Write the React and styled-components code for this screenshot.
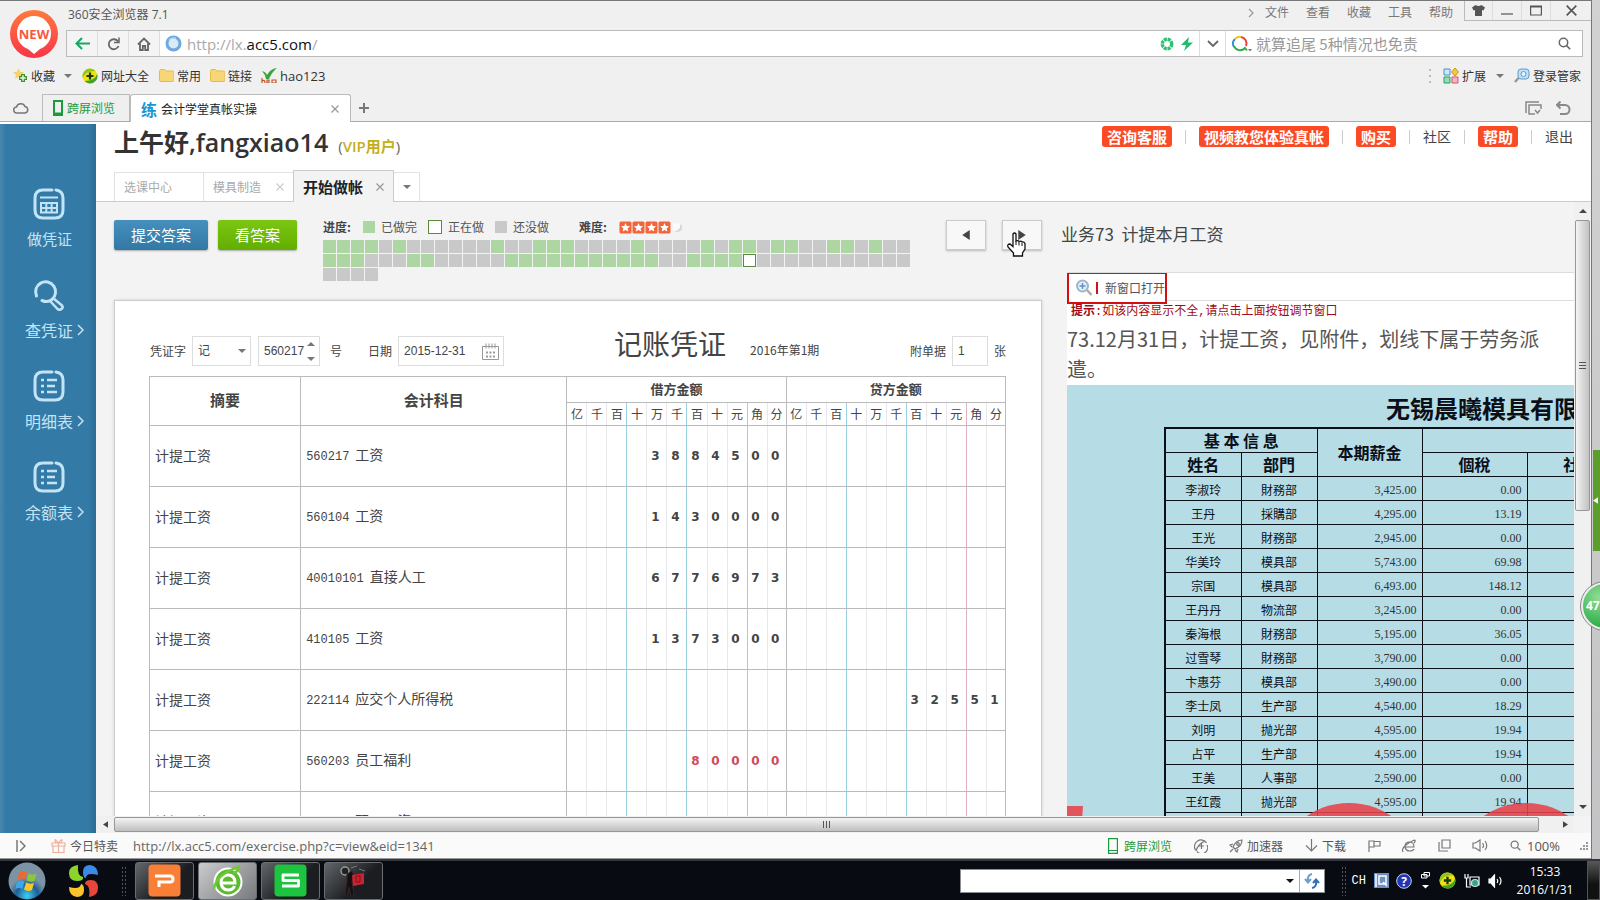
import React from 'react';
import styled, { createGlobalStyle, css } from 'styled-components';

const Global = createGlobalStyle`
  * { box-sizing: border-box; }
  body { margin: 0; background: #c6c6c8; color: #444; font: 12px/16px "Open Sans", "Noto Sans CJK SC", sans-serif; }
  button, input, select { font: inherit; color: inherit; margin: 0; padding: 0; border: 0; background: none; border-radius: 0; outline: 0; }
  a { color: inherit; text-decoration: none; }
  h1, h2, h3, p { margin: 0; font-weight: 400; }
  svg { display: block; flex: none; }
`;

const cjk = '"Noto Sans CJK SC", sans-serif';

/* ---------- frame ---------- */
const Screen = styled.div`
  height: 100vh; min-height: 600px; display: flex; flex-direction: column; overflow: hidden; position: relative;
`;
const Desktop = styled.div`
  flex: 1; min-height: 0; display: flex; padding-right: 8px;
  background: linear-gradient(#d2d2d2, #c4c4c6);
`;
const BrowserWindow = styled.div`
  flex: 1; min-width: 0; display: flex; flex-direction: column; background: #f0f0f0;
  border-top: 1px solid #777; border-right: 1px solid #777;
`;

/* ---------- browser chrome ---------- */
const ChromeTop = styled.header`
  display: grid; grid-template-columns: 66px minmax(0, 1fr); grid-template-rows: 29px 27px;
`;
const LogoCell = styled.div`
  grid-row: 1 / 3; display: flex; padding: 8px 0 0 9px;
`;
const TitleRow = styled.div`
  display: flex; align-items: flex-start; color: #555;
`;
const WindowTitle = styled.span`font-size: 12px; line-height: 28px; padding-left: 2px;`;
const MenuBar = styled.nav`
  margin-left: auto; display: flex; align-items: center; height: 24px; gap: 17px; margin-right: 11px; color: #777;
  svg { margin-right: -6px; }
`;
const WindowButtons = styled.div`
  display: flex; height: 20px; border: 1px solid #bbb; border-top: 0; border-right: 0;
`;
const WindowButton = styled.button`
  width: ${p => p.$w}px; display: flex; align-items: center; justify-content: center;
  & + & { border-left: 1px solid #ddd; }
`;
const AddressBar = styled.div`
  display: flex; margin-right: 8px; background: #fff; border: 1px solid #bbb;
`;
const NavButton = styled.button`
  width: 31px; display: flex; align-items: center; justify-content: center; background: #f4f4f4; border-right: 1px solid #ddd;
`;
const UrlBox = styled.a`
  flex: 1; display: flex; align-items: center; padding-left: 5px; font-size: 15px; color: #aaa;
  svg { margin-right: 5px; }
  b { font-weight: 400; color: #111; }
`;
const AddressTools = styled.div`display: flex; align-items: center; gap: 7px; padding-right: 6px;`;
const AddressDrop = styled.button`
  width: 27px; border: 1px solid #ddd; border-width: 0 1px; display: flex; align-items: center; justify-content: center;
`;
const SearchBox = styled.label`
  width: 356px; display: flex; align-items: center; padding: 0 11px 0 6px;
  input { flex: 1; min-width: 0; margin-left: 4px; font: 15px/22px ${cjk}; color: #999; }
  input::placeholder { color: #999; opacity: 1; }
`;
const Bookmarks = styled.nav`
  height: 37px; display: flex; align-items: center; padding: 0 10px 0 13px; color: #333;
`;
const Bookmark = styled.a`
  display: flex; align-items: center; gap: 3px; margin-right: ${p => p.$after}px; font-family: ${p => (p.$latin ? '"Open Sans"' : cjk)}; font-size: ${p => (p.$latin ? 13 : 12)}px;
`;
const BookmarkGap = styled.i`width: 10px;`;
const Push = styled.span`margin-left: auto;`;
const Caret = styled.span`
  width: 0; height: 0; border: ${p => p.$s || 4}px solid transparent; border-bottom: 0; border-top-color: ${p => p.$c || '#777'};
  ${p => p.$up && css`transform: rotate(180deg);`}
`;
const TabStrip = styled.nav`
  height: 28px; display: flex; align-items: stretch; border-bottom: 1px solid #aaa; padding-left: 13px;
  font-family: ${cjk};
`;
const StripIcon = styled.button`display: flex; align-items: center; width: ${p => p.$w}px;`;
const BrowserTab = styled.a`
  display: flex; align-items: center; width: ${p => p.$w}px; padding: 0 10px; gap: 4px; border: 1px solid #bbb; border-bottom: 0;
  color: ${p => (p.$active ? '#222' : '#1d9b3c')};
  background: ${p => (p.$active ? '#fff' : '#efefef')};
  ${p => p.$active && css`margin-bottom: -1px; border-radius: 3px 3px 0 0;`}
  svg:last-child:not(:first-child) { margin-left: auto; margin-right: 1px; }
`;
const Favicon = styled.b`font-size: 16px; color: #1b95d4; width: 16px;`;

/* ---------- page ---------- */
const Page = styled.div`flex: 1; min-height: 0; display: flex; background: #fff;`;
const Sidebar = styled.nav`
  width: 96px; flex: none; margin-top: 2px; padding-top: 64px; display: flex; flex-direction: column; gap: 30px;
  background: linear-gradient(90deg, #4a86ad 0, #337ba6 6px, #337ba6 88px, #2b6c95 96px); color: #c3e3f7;
`;
const SideItem = styled.a`
  display: flex; flex-direction: column; gap: 9px; padding-left: 25px; font: ${p => (p.$plain ? 15 : 16)}px/20px ${cjk};
  > svg { margin-left: 8px; }
  span { display: flex; align-items: center; gap: 4px; padding-left: ${p => (p.$plain ? 2 : 0)}px; }
`;
const Main = styled.main`flex: 1; min-width: 0; display: flex; flex-direction: column;`;
const PageHeader = styled.header`
  height: 80px; flex: none; padding: 0 18px; border-bottom: 1px solid #ccc; display: flex; flex-direction: column; justify-content: space-between;
`;
const HeaderTop = styled.div`display: flex; justify-content: space-between; align-items: flex-start; height: 44px;`;
const Greeting = styled.h1`
  font-size: 25px; font-weight: 600; line-height: 40px; color: #333; display: flex; align-items: baseline; gap: 10px;
  small { font-size: 15px; font-weight: 400; line-height: 20px; color: #666; }
  em { font-style: normal; font-weight: 600; color: #c4ae1c; }
`;
const UserNav = styled.nav`
  display: flex; align-items: center; margin-top: 4px; font: 14px/21px ${cjk}; color: #444;
`;
const NavSep = styled.i`width: 1px; height: 14px; background: #ccc; margin: 0 13px;`;
const Pill = styled.a`
  background: #fb4b26; color: #fff; font-weight: 700; font-size: 15px; padding: 0 5px; border-radius: 3px;
`;
const PageTabs = styled.nav`
  display: flex; align-items: flex-end; font-family: ${cjk}; color: #aaa; height: 29px;
`;
const PageTab = styled.a`
  height: ${p => (p.$active ? 32 : 29)}px; width: ${p => p.$w}px; display: flex; align-items: center; justify-content: space-between; padding: 0 9px;
  border: 1px solid #e2e2e2; border-bottom: 0; border-right: 0;
  ${p => p.$active && css`
    font-size: 15px; font-weight: 700; color: #222; background: #f3f3f3; border-color: #ccc; border-right: 1px solid #ccc;
    margin-bottom: -1px;
  `}
  ${p => p.$drop && css`border-right: 1px solid #e2e2e2; border-left: 0;`}
`;
const ScrollGrid = styled.div`
  flex: 1; min-height: 0; display: grid; grid-template-columns: minmax(0, 1fr) 17px; grid-template-rows: minmax(0, 1fr) 17px;
  background: #f3f3f3;
`;
const Content = styled.div`
  overflow: hidden; padding-left: 18px; display: grid; grid-template-columns: minmax(0, 928fr) minmax(0, 507fr); column-gap: 25px;
  grid-template-rows: minmax(0, 1fr);
`;
const Column = styled.section`display: flex; flex-direction: column; min-width: 0; min-height: 0;`;

const Toolbar = styled.div`height: 98px; flex: none; padding-top: 18px; display: flex; align-items: flex-start;`;
const ActionButton = styled.button`
  height: 30px; width: ${p => p.$w}px; margin-right: 10px; border-radius: 2px; color: #fff; font: 15px/28px ${cjk};
  background: ${p => (p.$green ? 'linear-gradient(#7cc613, #62ae00)' : 'linear-gradient(#468fbe, #3278a4)')};
  box-shadow: 0 1px 2px rgba(0,0,0,.3);
`;
const Progress = styled.div`margin-left: 16px; font-family: ${cjk};`;
const Legend = styled.div`
  height: 14px; display: flex; align-items: center; margin-bottom: 6px; color: #555;
  b { width: 40px; color: #444; }
`;
const LegendItem = styled.span`display: flex; align-items: center; gap: 6px; margin-right: ${p => p.$after || 11}px;`;
const cellLook = css`
  ${p => p.$s === 'done' && css`background: #aed6a2;`}
  ${p => p.$s === 'todo' && css`background: #c9c9c9;`}
  ${p => p.$s === 'now' && css`background: #fff; border: 1px solid #5b8a3c;`}
`;
const Swatch = styled.i`width: ${p => (p.$s === 'now' ? 14 : 12)}px; height: ${p => (p.$s === 'now' ? 14 : 12)}px; ${cellLook}`;
const Cells = styled.div`display: grid; grid-template-columns: repeat(42, 13px); grid-auto-rows: 13px; gap: 1px;`;
const Cell = styled.i`${cellLook}`;
const Pager = styled.div`margin-left: auto; display: flex; gap: 16px;`;
const PagerButton = styled.button`
  width: 40px; height: 30px; background: #f8f8f8; border: 1px solid #ccc; box-shadow: 0 1px 2px rgba(0,0,0,.25);
  display: flex; align-items: center; justify-content: center; position: relative;
`;
const HandCursor = styled.svg`position: absolute; left: 4px; top: 11px;`;

/* ---------- voucher ---------- */
const Card = styled.div`
  flex: 1; min-height: 0; overflow: hidden; background: #fff; border: 1px solid #ccc; border-bottom: 0; padding: 26px 35px 0 34px;
  box-shadow: 0 0 3px rgba(0,0,0,.15);
`;
const VoucherHead = styled.div`
  display: flex; align-items: flex-start; height: 49px; font-family: ${cjk}; color: #444;
`;
const FieldGroup = styled.div`display: flex; align-items: center; margin-top: 9px; ${p => p.$right && css`margin-left: auto;`}`;
const Label = styled.label`margin: 0 ${p => p.$r || 6}px 0 ${p => p.$l || 0}px;`;
const Field = styled.span`
  width: ${p => p.$w}px; height: 30px; border: 1px solid #ddd; display: flex; align-items: center; padding: 0 4px 0 5px; margin-right: ${p => p.$r || 0}px;
  input, select { flex: 1; min-width: 0; width: 10px; appearance: none; height: 28px; font: 12px/16px "Liberation Sans", ${cjk}; }
`;
const Spinner = styled.span`
  display: flex; flex-direction: column; gap: 11px;
  button { display: flex; }
`;
const VoucherTitle = styled.div`
  display: flex; align-items: baseline; gap: 24px; margin-left: 110px;
  h2 { font-size: 28px; line-height: 32px; color: #444; }
`;
const Ledger = styled.table`
  width: 100%; table-layout: fixed; border-collapse: collapse; font-family: ${cjk}; color: #444;
  th, td { padding: 0 0 2px; font-weight: 400; border: 1px solid #bbb; }
`;
const HeadCell = styled.th`&& { font-weight: 700; font-size: ${p => p.$size}px; height: ${p => p.$h}px; }`;
const unitEdge = i => (i === 0 ? '#bbb' : i === 3 || i === 6 ? '#9ad0df' : i === 9 ? '#dfb3c4' : '#e8e8ea');
const UnitCell = styled.th`&& { height: 23px; padding: 0; border-left-color: ${p => unitEdge(p.$i)}; border-right-color: ${p => unitEdge((p.$i + 1) % 11)}; font-size: 12px; }`;
const DigitCell = styled.td`
  && { border-left-color: ${p => unitEdge(p.$i)}; border-right-color: ${p => unitEdge((p.$i + 1) % 11)};
  padding: 0 3px 0 0; text-align: center; font: 700 12px/16px "DejaVu Sans"; color: ${p => (p.$red ? '#d04a58' : '#444')}; }
`;
const TextCell = styled.td`
  && { height: 61px; padding-left: 5px; font-size: 14px; }
  code { font: 12px/16px "Liberation Mono"; margin-right: 6px; }
`;

/* ---------- task panel ---------- */
const TaskTitle = styled.h2`
  height: 70px; flex: none; margin-left: -6px; font: 17px/64px ${cjk}; color: #444;
`;
const Panel = styled.div`
  flex: 1; min-height: 0; overflow: hidden; background: #fff; display: flex; flex-direction: column; border-top: 1px solid #ddd;
`;
const PanelBar = styled.div`height: 28px; flex: none; border-bottom: 1px solid #ddd;`;
const OpenButton = styled.button`
  margin-top: -1px; width: 100px; height: 32px; border: 2px solid #d40f12; display: flex; align-items: center; padding-left: 6px; position: relative;
  background: #fff; color: #555; font-family: ${cjk};
  i { width: 2px; height: 12px; background: #d01218; margin: 0 7px 0 3px; }
`;
const Hint = styled.p`
  flex: none; padding: 4px 0 0 4px; height: 23px; line-height: 14px; color: #a30a18; font-family: "Liberation Mono", ${cjk};
`;
const Question = styled.p`flex: none; font: 20px/30px ${cjk}; color: #555; padding-right: 30px; height: 61px;`;
const Sheet = styled.div`
  flex: 1; min-height: 0; background: #b6dce6; overflow: hidden; position: relative; padding-left: 97px; color: #0a0f18;
  h3 { width: 684px; text-align: center; font: 700 24px/46px ${cjk}; height: 42px; }
`;
const Payroll = styled.table`
  width: 467px; table-layout: fixed; border-collapse: collapse; font-family: ${cjk}; border: 2px solid #0a0f18;
  th, td { border: 1px solid #0a0f18; padding: 0; height: 24px; line-height: 16px; text-align: center; }
  td { padding-top: 3px; }
  th { font-size: 16px; font-weight: 700; }
`;
const Amount = styled.td`&& { text-align: right; padding-right: 5px; font: 12px/16px "Liberation Serif"; color: #333; }`;
const Stamps = styled.svg`position: absolute; left: 0; top: 418px; opacity: .88;`;

/* ---------- scrollbars ---------- */
const VBar = styled.div`display: flex; flex-direction: column; align-items: center; background: #f0f0f0;`;
const HBar = styled.div`display: flex; align-items: center; background: #f0f0f0;`;
const BarArrow = styled.button`width: 18px; height: 18px; display: flex; align-items: center; justify-content: center; flex: none;`;
const Thumb = styled.span`
  flex: ${p => p.$grow} 0 0; display: flex; align-items: center; justify-content: center; border: 1px solid #979797; border-radius: 2px;
  ${p => (p.$v ? css`width: 15px; background: linear-gradient(90deg, #f4f4f4, #dcdcdc 45%, #c2c2c4);` : css`height: 15px; background: linear-gradient(#f4f4f4, #dcdcdc 45%, #bfbfc1);`)}
`;
const Rest = styled.span`flex: ${p => p.$grow} 0 0;`;

/* ---------- status bar, taskbar ---------- */
const StatusBar = styled.footer`
  height: 26px; flex: none; display: flex; align-items: center; background: #fafafa; border-bottom: 1px solid #999; padding: 0 3px 0 16px; color: #555; font-family: ${cjk};
`;
const StatusItem = styled.button`
  display: flex; align-items: center; gap: ${p => p.$gap || 4}px; margin-right: ${p => p.$r}px; color: ${p => p.$c || '#555'};
`;
const StatusUrl = styled.span`font: 13px/16px "Open Sans"; color: #666; margin-right: auto;`;
const Zoom = styled.span`font: 13px/16px "Open Sans";`;
const Taskbar = styled.div`
  height: 41px; flex: none; display: flex; align-items: center; background: #080b12; border-top: 2px solid #33373d; color: #fff; padding-left: 7px;
`;
const Dots = styled.i`width: 6px; height: 30px; background: radial-gradient(#555 1px, transparent 1px) 0 0 / 3px 4px; margin: 0 ${p => p.$r}px 0 ${p => p.$l}px;`;
const TaskButton = styled.button`
  width: 59px; height: 38px; margin-right: 4px; border: 1px solid #6a6d72; border-radius: 3px; display: flex; align-items: center; justify-content: center;
  background: ${p => (p.$active ? 'linear-gradient(135deg, #c9cbcd, #77797c)' : 'linear-gradient(135deg, #63666a, #1b1d21 60%)')};
`;
const IconButton = styled.button`display: flex; margin-right: ${p => p.$r || 0}px; color: #fff;`;
const DeskSearch = styled.label`
  margin-left: auto; width: 365px; height: 24px; background: #fff; border: 1px solid #8a8f96; display: flex; align-items: center;
  input { flex: 1; min-width: 0; height: 22px; }
`;
const DeskGo = styled.button`width: 25px; height: 22px; margin-left: 5px; border-left: 1px solid #8fb0d0; display: flex; align-items: center; justify-content: center;`;
const Tray = styled.div`display: flex; align-items: center; font: 12px/16px "Liberation Mono";`;
const Clock = styled.time`width: 84px; text-align: center; font: 12px/18px "Open Sans"; display: flex; flex-direction: column;`;
const ShowDesktop = styled.button`width: 13px; height: 39px; border: 1px solid #555; background: linear-gradient(#555, #111 60%);`;

/* ---------- floating ---------- */
const SideHandle = styled.button`
  position: absolute; right: 0; top: 450px; width: 7px; height: 101px; background: #5a9e2b; display: flex; align-items: center;
`;
const SpeedBall = styled.div`
  position: absolute; right: -29px; top: 582px; width: 48px; height: 48px; border-radius: 50%; border: 2px solid #eee; outline: 1px solid #888;
  background: radial-gradient(circle at 35% 30%, #8fdc94, #2fae4a 70%); color: #fff; font: 700 12px/44px "Open Sans"; padding-left: 3px;
`;

/* ---------- icons ---------- */
const S = ({ w = 16, h = w, vb, c = '#777', sw = 1.5, children }) => (
  <svg width={w} height={h} viewBox={vb || `0 0 ${w} ${h}`} fill="none" stroke={c} strokeWidth={sw}>{children}</svg>
);
const Cross = ({ c = '#aaa', s = 8 }) => <S w={s} vb="0 0 8 8" c={c} sw="1.2"><path d="M.5.5l7 7M7.5.5l-7 7" /></S>;
const Phone = ({ c = '#1d9b3c', thin }) => (
  <S w={10} h={16} c={c} sw={thin ? 1.2 : 2}>
    <path d={thin ? 'M.6.6h8.800v14.800H.6zM.6 12.500h8.800' : 'M1 1h8v14H1zM1 13.500h8'} />
  </S>
);
const Folder = () => <S w={15} h={13} c="#e3bb4a" sw="1"><path d="M.5 2.5q0-2 1.500-2h3.500l1.500 1.500h6.500q1.500 0 1.500 1.500v7.500q0 1.500-1.500 1.500h-11.500q-1.500 0-1.500-1.500z" fill="#f7d678" /></S>;
const Plus360 = ({ s = 16 }) => (
  <svg width={s} height={s} viewBox="0 0 16 16"><circle cx="8" cy="8" r="7.500" fill="#f2e012" /><path d="M8 .5A7.500 7.500 0 0 0 .8 10Q3 3 13.500 3A7.500 7.500 0 0 0 8 .5" fill="#8cc820" /><path d="M8 15.500A7.500 7.500 0 0 0 15.200 6Q13 13 2.500 13A7.500 7.500 0 0 0 8 15.500" fill="#3ea32a" /><path d="M8 4.500v7M4.500 8h7" stroke="#143c10" strokeWidth="2.200" /></svg>
);
const Frame = () => <path d="M19 2H10Q2 2 2 10v12q0 8 8 8h12q8 0 8-8V10q0-7-7-8" strokeWidth="3" strokeLinecap="round" />;
const SideIcon = ({ kind }) => (
  <S w={32} c="#c3e3f7" sw="2">
    {kind === 'voucher' && <><Frame /><path d="M7 9.500h18M8 15h16v9.500H8zM8 20h16M13.300 15v9.500M18.600 15v9.500" /></>}
    {kind === 'search' && <><path d="M3.500 17A10 10 0 1 1 19 20.500Q15 24 9 21.500" strokeWidth="3" strokeLinecap="round" /><path d="M20 19l9 7.500q1.500 2-.5 3.500t-4 0l-7-7.500" strokeWidth="2.500" strokeLinejoin="round" /></>}
    {kind === 'list' && <><Frame /><path d="M8 10h3M14 10h10M8 16h3M14 16h8M8 22h3M14 22h10" strokeWidth="2.500" /></>}
  </S>
);
const Tri = ({ d, c = '#444', w = 6, h = 8 }) => <svg width={w} height={h} viewBox="0 0 6 8"><path d={d} fill={c} /></svg>;
const Star = () => <svg width="13" height="13" viewBox="0 0 13 13"><rect width="12" height="12" x=".5" y=".5" rx="1.500" fill="#f2653a" /><path d="M6.500 2l1.300 2.900 3.200.4-2.400 2.100.7 3.100-2.800-1.600-2.800 1.600.7-3.100L2 5.300l3.200-.4z" fill="#fff" /></svg>;
const Lens = ({ c = '#777', s = 13 }) => <S w={s} vb="0 0 13 13" c={c} sw="1.500"><circle cx="5.500" cy="5.500" r="4.200" /><path d="M8.600 8.600l3.600 3.600" /></S>;

/* ---------- data ---------- */
const range = (a, b) => Array.from({ length: b - a + 1 }, (_, i) => a + i);
const done = new Set([0, 1, 2, 3, 5, 12, 15, 16, 17, 22, 27, 29, 30, 32, 33, 36, 37, 39, 42, 43, 44, 48, 49, ...range(55, 65), ...range(68, 71)]);
const cells = range(0, 87).map(i => (i === 72 ? 'now' : done.has(i) ? 'done' : 'todo'));
const units = '亿千百十万千百十元角分'.split('');
const entries = [
  ['560217', '工资', '3884500', ''],
  ['560104', '工资', '1430000', ''],
  ['40010101', '直接人工', '6776973', ''],
  ['410105', '工资', '1373000', ''],
  ['222114', '应交个人所得税', '', '32551'],
  ['560203', '员工福利', '80000', '', true],
  ['560201', '职工工资', '', ''],
];
const payroll = [
  ['李淑玲', '財務部', '3,425.00', '0.00'], ['王丹', '採購部', '4,295.00', '13.19'], ['王光', '財務部', '2,945.00', '0.00'],
  ['华美玲', '模具部', '5,743.00', '69.98'], ['宗国', '模具部', '6,493.00', '148.12'], ['王丹丹', '物流部', '3,245.00', '0.00'],
  ['秦海根', '財務部', '5,195.00', '36.05'], ['过雪琴', '財務部', '3,790.00', '0.00'], ['卞惠芬', '模具部', '3,490.00', '0.00'],
  ['李士凤', '生产部', '4,540.00', '18.29'], ['刘明', '抛光部', '4,595.00', '19.94'], ['占平', '生产部', '4,595.00', '19.94'],
  ['王美', '人事部', '2,590.00', '0.00'], ['王红霞', '抛光部', '4,595.00', '19.94'], ['', '', '', ''],
];

const Digits = ({ value, red }) => value.padStart(11, ' ').split('').map((d, i) => <DigitCell key={i} $i={i} $red={red}>{d.trim()}</DigitCell>);

function Chrome() {
  return (
    <>
      <ChromeTop>
        <LogoCell>
          <svg width="50" height="50" viewBox="0 0 50 50">
            <defs><linearGradient id="new" x2="0" y2="1"><stop stopColor="#ff7a3c" /><stop offset="1" stopColor="#f8354a" /></linearGradient></defs>
            <circle cx="25" cy="25" r="24" fill="url(#new)" />
            <path d="M25 7a17 17 0 0 1 17 17.500c0 8-5 13-11 15.500l-6 5-6-5C13 37.500 8 32.500 8 24.500A17 17 0 0 1 25 7" fill="#fff" />
            <text x="25" y="30" textAnchor="middle" fontSize="13" fontWeight="700" fontFamily="Open Sans" fill="#f9573f">NEW</text>
          </svg>
        </LogoCell>
        <TitleRow>
          <WindowTitle>360安全浏览器 7.1</WindowTitle>
          <MenuBar>
            <S w={6} h={10} c="#999" sw="1.200"><path d="M1 1l4 4-4 4" /></S>
            {['文件', '查看', '收藏', '工具', '帮助'].map(t => <a href="#menu" key={t}>{t}</a>)}
          </MenuBar>
          <WindowButtons>
            <WindowButton $w={27} aria-label="皮肤"><svg width="13" height="11" viewBox="0 0 13 11"><path d="M3.500 0Q6.500 2 9.500 0L13 2.500 11.500 5.500 10 5v6H3V5l-1.500.5L0 2.500z" fill="#555" /></svg></WindowButton>
            <WindowButton $w={29} aria-label="最小化"><S w={12} h={10} c="#555" sw="1.200"><path d="M0 8h12" /></S></WindowButton>
            <WindowButton $w={29} aria-label="最大化"><S w={12} h={11} c="#555" sw="1.200"><path d="M.6 1.500h10.800v8.500H.6z" /><path d="M0 1.500h12" strokeWidth="2" /></S></WindowButton>
            <WindowButton $w={41} aria-label="关闭"><Cross c="#555" s={11} /></WindowButton>
          </WindowButtons>
        </TitleRow>
        <AddressBar>
          <NavButton aria-label="后退"><S w={15} h={13} c="#16a765" sw="2"><path d="M15 6.500H1.500M7 1L1.500 6.500 7 12" /></S></NavButton>
          <NavButton aria-label="刷新"><S w={13} h={14} c="#666" sw="1.800"><path d="M11 4.500A5 5 0 1 0 11.500 9" /><path d="M12 .5v5H7" strokeWidth="1.500" /></S></NavButton>
          <NavButton aria-label="主页"><S w={14} c="#666" sw="1.800"><path d="M1 7.500L7 1.500l6 6M3 6.500V13h2.800V9h2.400v4H11V6.500" /></S></NavButton>
          <UrlBox href="http://lx.acc5.com/">
            <S w={17} c="#6fa8dc" sw="3"><circle cx="8.500" cy="8.500" r="6.500" fill="#d8ebfa" /><path d="M4 5.500a5.500 5.500 0 0 1 7-2" stroke="#b8d6f2" strokeWidth="1.500" /></S>
            <span>http://lx.<b>acc5.com</b>/</span>
          </UrlBox>
          <AddressTools>
            <S w={14} c="#2fc078" sw="3.500"><circle cx="7" cy="7" r="4.700" strokeDasharray="3 .7" /></S>
            <svg width="12" height="14" viewBox="0 0 12 14"><path d="M8 0L0 8h5l-2 6 9-8.500H7z" fill="#27b96c" /></svg>
          </AddressTools>
          <AddressDrop aria-label="展开"><S w={12} h={8} c="#666" sw="1.800"><path d="M1 1l5 5 5-5" /></S></AddressDrop>
          <SearchBox>
            <svg width="20" height="18" viewBox="0 0 20 18" fill="none" strokeWidth="2"><path d="M2 12A6.500 6.500 0 0 1 3 4" stroke="#3a8ee0" /><path d="M3 4a6.500 6.500 0 0 1 6-2" stroke="#f3c52b" /><path d="M9 2a6.500 6.500 0 0 1 5 9" stroke="#e4463c" /><path d="M2 11a6.500 6.500 0 0 0 11 2l2 2.500" stroke="#35a852" /><path d="M16 14h4l-2 2.500z" fill="#777" /></svg>
            <input aria-label="搜索" placeholder="就算追尾 5种情况也免责" />
            <Lens c="#666" />
          </SearchBox>
        </AddressBar>
      </ChromeTop>
      <Bookmarks>
        <Bookmark href="#fav" $after={9}>
          <svg width="15" height="15" viewBox="0 0 15 15"><path d="M5.500 0l1.600 3.800 4 .4-3 2.700.9 4-3.500-2L2 11l.9-4L0 4.300l4-.5z" fill="#f6d36a" /><path d="M10 6v8M6 10h8" stroke="#3d9130" strokeWidth="4" /><path d="M10 7.200v5.600M7.200 10h5.600" stroke="#e8f6e2" strokeWidth="1.500" /></svg>收藏</Bookmark>
        <Caret />
        <BookmarkGap />
        <Bookmark href="#sites" $after={10}><Plus360 />网址大全</Bookmark>
        <Bookmark href="#common" $after={9}><Folder />常用</Bookmark>
        <Bookmark href="#links" $after={9}><Folder />链接</Bookmark>
        <Bookmark href="#hao123" $after={0} $latin>
          <svg width="16" height="15" viewBox="0 0 16 15"><path d="M1 3q4 1 5 4Q9 1 16 0 11 4 8 11H5Q4 6 1 3" fill="#36a53c" /><path d="M1 10v5M1 13q3-2 3 2M6 12h2v3H6zM11 12h4v3h-4z" fill="none" stroke="#c2532b" strokeWidth="1.200" /></svg>hao123</Bookmark>
        <Push />
        <S w={15} h={16} c="#bbb" sw="2"><path d="M2 1v2M2 7v2M2 13v2" /></S>
        <Bookmark href="#ext" $after={10}>
          <S w={16} sw="1"><path d="M1 1h6v6H1z" fill="#cfe7fa" stroke="#4a90c8" /><path d="M1 9h6v6H1z" fill="#8fe0b4" stroke="#2e9e63" /><path d="M9 9h6v6H9z" fill="#f8b3be" stroke="#cf5a6c" /><path d="M12 0l3.500 4L12 8 8.500 4z" fill="#f4c83c" stroke="#c79a1a" /></S>扩展</Bookmark>
        <Caret />
        <BookmarkGap />
        <Bookmark href="#login" $after={0}>
          <S w={16} c="#5f9ccb" sw="1"><rect x="4" y="1" width="11" height="10" rx="3" fill="#bfe0f6" /><circle cx="9.500" cy="6" r="2.500" fill="#e9f6ff" /><path d="M4.500 10L1 14" strokeWidth="2.500" stroke="#999" /></S>登录管家</Bookmark>
      </Bookmarks>
      <TabStrip>
        <StripIcon $w={29} aria-label="云同步"><S w={16} h={12} c="#777" sw="1.500"><path d="M4 11a3 3 0 0 1-.5-6 4.500 4.500 0 0 1 8.500-.5A3.300 3.300 0 0 1 12 11z" /></S></StripIcon>
        <BrowserTab href="#phone" $w={88}><Phone />跨屏浏览</BrowserTab>
        <BrowserTab href="#page" $w={221} $active><Favicon>练</Favicon>会计学堂真帐实操<Cross c="#999" /></BrowserTab>
        <StripIcon $w={27} aria-label="新标签"><S w={26} h={12} c="#777" sw="2"><path d="M13 1v10M8 6h10" /></S></StripIcon>
        <Push />
        <StripIcon $w={31} aria-label="标签列表"><S w={17} h={14} c="#888" sw="1.500"><path d="M1 12V1h13M10 13H4V4h12v4M10 9l2.500 3L15 9" /></S></StripIcon>
        <StripIcon $w={35} aria-label="撤销"><S w={15} h={14} c="#888" sw="2"><path d="M1 4h8a4.500 4.500 0 0 1 0 9H4M4.500.5L1 4l3.500 3.500" /></S></StripIcon>
      </TabStrip>
    </>
  );
}

function Voucher() {
  return (
    <Card>
      <VoucherHead>
        <FieldGroup>
          <Label htmlFor="kind" $l={1}>凭证字</Label>
          <Field $w={59} $r={7}><select id="kind"><option>记</option></select><Caret $s={4} /></Field>
          <Field $w={62} $r={5}>
            <input id="num" defaultValue="560217" />
            <Spinner><button aria-label="加"><Caret $s={4} $up /></button><button aria-label="减"><Caret $s={4} /></button></Spinner>
          </Field>
          <Label htmlFor="num" $l={5} $r={20}>号</Label>
          <Label htmlFor="date" $l={6}>日期</Label>
          <Field $w={106}>
            <input id="date" defaultValue="2015-12-31" />
            <S w={17} c="#999" sw="1"><path d="M.5 3.500h16v13H.5zM4 .5v5M7 .5v5M10 .5v5M13 .5v5" /><path d="M4 9.500h9M4 13.500h9" strokeDasharray="2 1.500" strokeWidth="2" /></S>
          </Field>
        </FieldGroup>
        <VoucherTitle><h2>记账凭证</h2><span>2016年第1期</span></VoucherTitle>
        <FieldGroup $right>
          <Label htmlFor="att">附单据</Label>
          <Field $w={36} $r={6}><input id="att" defaultValue="1" /></Field>张
        </FieldGroup>
      </VoucherHead>
      <Ledger>
        <colgroup><col width="151" /><col width="266" />{range(0, 21).map(i => <col key={i} width={i % 11 === 10 ? 19 : 20} />)}</colgroup>
        <thead>
          <tr><HeadCell rowSpan={2} $size={15} $h={49}>摘要</HeadCell><HeadCell rowSpan={2} $size={15} $h={49}>会计科目</HeadCell><HeadCell colSpan={11} $size={13} $h={26}>借方金额</HeadCell><HeadCell colSpan={11} $size={13} $h={26}>贷方金额</HeadCell></tr>
          <tr>{[...units, ...units].map((u, i) => <UnitCell key={i} $i={i % 11}>{u}</UnitCell>)}</tr>
        </thead>
        <tbody>
          {entries.map(([code, name, debit, credit, red]) => (
            <tr key={code}><TextCell>计提工资</TextCell><TextCell><code>{code}</code>{name}</TextCell><Digits value={debit} red={red} /><Digits value={credit} /></tr>
          ))}
        </tbody>
      </Ledger>
    </Card>
  );
}

function Task() {
  return (
    <Column>
      <TaskTitle>业务73&nbsp; 计提本月工资</TaskTitle>
      <Panel>
        <PanelBar>
          <OpenButton><S w={18} c="#9fb4c8" sw="2"><circle cx="7.500" cy="7" r="5.500" fill="#e4f0fa" /><path d="M7.500 4v6M4.500 7h6" stroke="#5a93c8" strokeWidth="1.500" /><path d="M12 11l4.500 5" stroke="#aaa" strokeWidth="2.500" /></S><i />新窗口打开</OpenButton>
        </PanelBar>
        <Hint><b>提示</b>:如该内容显示不全,请点击上面按钮调节窗口</Hint>
        <Question>73.12月31日，计提工资，见附件，划线下属于劳务派遣。</Question>
        <Sheet>
          <h3>无锡晨曦模具有限公司</h3>
          <Payroll>
            <colgroup><col width="76" /><col width="76" /><col width="105" /><col width="105" /><col width="105" /></colgroup>
            <thead>
              <tr><th colSpan={2}>基 本 信 息</th><th rowSpan={2}>本期薪金</th><th colSpan={2} /></tr>
              <tr><th>姓名</th><th>部門</th><th>個稅</th><th>社保</th></tr>
            </thead>
            <tbody>
              {payroll.map(([n, d, a, t], i) => <tr key={i}><td>{n}</td><td>{d}</td><Amount>{a}</Amount><Amount>{t}</Amount><td /></tr>)}
            </tbody>
          </Payroll>
          <Stamps width="508" height="60" viewBox="0 0 508 60"><g fill="#e8434b"><path d="M0 3h16l-4 57H0z" /><ellipse cx="282" cy="60" rx="68" ry="60" /><ellipse cx="459" cy="60" rx="68" ry="60" /></g></Stamps>
        </Sheet>
      </Panel>
    </Column>
  );
}

export default function App() {
  return (
    <>
      <Global />
      <Screen>
        <Desktop>
          <BrowserWindow>
            <Chrome />
            <Page>
              <Sidebar>
                {[['做凭证', 'voucher'], ['查凭证', 'search'], ['明细表', 'list'], ['余额表', 'list']].map(([t, k], i) => (
                  <SideItem href="#side" key={t} $plain={i === 0}><SideIcon kind={k} /><span>{t}{i > 0 && <S w={7} h={12} c="#c3e3f7" sw="1.500"><path d="M1 1l5 5-5 5" /></S>}</span></SideItem>
                ))}
              </Sidebar>
              <Main>
                <PageHeader>
                  <HeaderTop>
                    <Greeting>上午好,fangxiao14<small>(<em>VIP用户</em>)</small></Greeting>
                    <UserNav>
                      <Pill href="#qa">咨询客服</Pill><NavSep /><Pill href="#video">视频教您体验真帐</Pill><NavSep /><Pill href="#buy">购买</Pill><NavSep />
                      <a href="#bbs">社区</a><NavSep /><Pill href="#help">帮助</Pill><NavSep /><a href="#exit">退出</a>
                    </UserNav>
                  </HeaderTop>
                  <PageTabs>
                    <PageTab href="#t1" $w={89}>选课中心</PageTab>
                    <PageTab href="#t2" $w={90}>模具制造<Cross c="#ccc" /></PageTab>
                    <PageTab href="#t3" $w={101} $active>开始做帐<Cross c="#999" /></PageTab>
                    <PageTab href="#t4" $w={26} $drop><Caret /></PageTab>
                  </PageTabs>
                </PageHeader>
                <ScrollGrid>
                  <Content>
                    <Column>
                      <Toolbar>
                        <ActionButton $w={94}>提交答案</ActionButton>
                        <ActionButton $w={79} $green>看答案</ActionButton>
                        <Progress>
                          <Legend>
                            <b>进度:</b>
                            <LegendItem><Swatch $s="done" />已做完</LegendItem>
                            <LegendItem><Swatch $s="now" />正在做</LegendItem>
                            <LegendItem $after={30}><Swatch $s="todo" />还没做</LegendItem>
                            <b>难度:</b>
                            <Star /><Star /><Star /><Star />
                            <svg width="13" height="13" viewBox="0 0 13 13"><path d="M10 3q2 2 1 5T5 11H2q5 0 8-8" fill="#d6d6d6" /><path d="M2 2h7v5l-4 3H2z" fill="#fafafa" /></svg>
                          </Legend>
                          <Cells>{cells.map((s, i) => <Cell key={i} $s={s} />)}</Cells>
                        </Progress>
                        <Pager>
                          <PagerButton aria-label="上一题"><Tri d="M6 0v8L0 4z" w={8} h={10} /></PagerButton>
                          <PagerButton aria-label="下一题"><Tri d="M0 0v8l6-4z" w={8} h={10} />
                            <HandCursor width="19" height="25" viewBox="0 0 19 25"><path d="M6 2q1.500-2 3 0v7q2-1 3 .5 2-1 3 .5 2-.5 3 1.500V17l-2.500 4v3h-9v-3L1 15q-1-3 2-3l3 2.500z" fill="#fff" stroke="#111" strokeWidth="1.300" /><path d="M9 9v4M12 10v3.500M15 11v3" stroke="#111" /></HandCursor>
                          </PagerButton>
                        </Pager>
                      </Toolbar>
                      <Voucher />
                    </Column>
                    <Task />
                  </Content>
                  <VBar>
                    <BarArrow aria-label="上"><Caret $up $c="#444" /></BarArrow>
                    <Thumb $v $grow={290}><S w={7} h={9} c="#555" sw="1"><path d="M0 1.500h7M0 4.500h7M0 7.500h7" /></S></Thumb>
                    <Rest $grow={289} />
                    <BarArrow aria-label="下"><Caret $c="#444" /></BarArrow>
                  </VBar>
                  <HBar>
                    <BarArrow aria-label="左"><Tri d="M6 0v8L0 4z" w={5} h={7} /></BarArrow>
                    <Thumb $grow={1424}><S w={9} h={7} c="#555" sw="1"><path d="M1.500 0v7M4.500 0v7M7.500 0v7" /></S></Thumb>
                    <Rest $grow={17} />
                    <BarArrow aria-label="右"><Tri d="M0 0v8l6-4z" w={5} h={7} /></BarArrow>
                  </HBar>
                </ScrollGrid>
              </Main>
            </Page>
            <StatusBar>
              <StatusItem $r={25} aria-label="侧栏"><S w={10} h={12}><path d="M1 0v12M4 1l5 5-5 5" /></S></StatusItem>
              <StatusItem $r={15}><S w={15} h={14} c="#eeb09a" sw="1.200"><path d="M1 4h13v3H1zM2 7v6.500h11V7M7.500 4v9.500M7.500 4Q4 4 4 1.500T7.500 4Q11 4 11 1.500T7.500 4" /></S>今日特卖</StatusItem>
              <StatusUrl>http://lx.acc5.com/exercise.php?c=view&amp;eid=1341</StatusUrl>
              <StatusItem $r={22} $gap={6} $c="#1d9b3c"><Phone thin />跨屏浏览</StatusItem>
              <StatusItem $r={21} aria-label="加速"><S w={14} c="#777" sw="1.200"><path d="M1.500 11A6 6 0 1 1 12.500 4M3 12.500A6 6 0 0 0 13 6M2 12Q4 5 11 2" /><path d="M7.500 4v6M5 7h5" /></S></StatusItem>
              <StatusItem $r={22}><S w={14} c="#777" sw="1.200"><path d="M4 8Q7 1 13 1q0 6-7 9zM4 5L1 6l2 2M9 10l-1 3-2-2M1 13l3-3" /><circle cx="9" cy="5" r="1.300" /></S>加速器</StatusItem>
              <StatusItem $r={22}><S w={13} h={13} c="#777" sw="1.200"><path d="M6.500 0v12M1 6.500L6.500 12 12 6.500" /></S>下载</StatusItem>
              <StatusItem $r={21} aria-label="旗标"><S w={13} c="#777" sw="1.200"><path d="M1 13V2h5v6H1M6 2.500h6V7H6" /></S></StatusItem>
              <StatusItem $r={22} aria-label="内核"><S w={14} c="#777" sw="1.200"><path d="M3 8h9Q12 3 7.500 3T3 8q1 4 4.500 4T12 10M1 13Q-1 9 6 4.500T13 1.500q.5 1-1 2.500" /></S></StatusItem>
              <StatusItem $r={21} aria-label="窗口"><S w={13} c="#777" sw="1.200"><path d="M4 1h8v8H4zM1 3v9h9" /></S></StatusItem>
              <StatusItem $r={22} aria-label="声音"><S w={16} h={13} c="#777" sw="1.200"><path d="M1 4h2.500L8 1v11L3.500 9H1zM10.500 4q2 2.500 0 5M13 2q3.500 4.500 0 9" /></S></StatusItem>
              <StatusItem $r={19} $gap={6}><Lens s={11} /><Zoom>100%</Zoom></StatusItem>
              <svg width="9" height="9" viewBox="0 0 9 9"><path d="M7 1h2v2H7zM7 4h2v2H7zM7 7h2v2H7zM4 4h2v2H4zM4 7h2v2H4zM1 7h2v2H1z" fill="#999" /></svg>
            </StatusBar>
          </BrowserWindow>
        </Desktop>
        <Taskbar>
          <IconButton $r={21} aria-label="开始">
            <svg width="40" height="38" viewBox="0 0 40 38"><defs><radialGradient id="orb" cy=".9"><stop stopColor="#3fd0f5" /><stop offset=".6" stopColor="#1c5f96" /><stop offset="1" stopColor="#7c93a5" /></radialGradient></defs>
              <circle cx="20" cy="19" r="18.500" fill="url(#orb)" /><path d="M12 11q4-3 8-.5l-2 7q-4-2-7.500.5z" fill="#ee6a2c" /><path d="M21.500 11.500q4 2 8 0l-2 7.500q-4 1.500-8-.5z" fill="#8cc63c" /><path d="M10 20q4-2.500 7.500-.5l-2 7.500q-4-2-7.500.5z" fill="#3fa4e8" /><path d="M19 20.500q4 2 8 .5l-2 7q-4 2-8-.5z" fill="#fbc72e" /></svg>
          </IconButton>
          <IconButton aria-label="360">
            <svg width="31" height="32" viewBox="0 0 31 32"><path d="M10 0Q1 1 1 8q0 8 8 8 7 0 6-4-6-1-5-12" fill="#8cd32c" /><path d="M30 10q0-9-8-10-7 0-7 7 0 6 3 6 0-6 12-3" fill="#3a8ae8" /><path d="M21 32q9-1 9-9 0-8-7-8-6 0-6 4 6 2 4 13" fill="#e5473a" /><path d="M1 22q0 9 8 10 7 0 7-7 0-6-3-6-1 6-12 3" fill="#fbc42d" /></svg>
          </IconButton>
          <Dots $l={22} $r={8} />
          <TaskButton aria-label="演示"><svg width="33" height="33" viewBox="0 0 33 33"><rect width="32" height="32" x=".5" y=".5" rx="4" fill="#fa7f36" /><path d="M7 12h15q3 0 3 3t-3 3H11v5" fill="none" stroke="#fff" strokeWidth="3" /></svg></TaskButton>
          <TaskButton $active aria-label="浏览器"><svg width="32" height="32" viewBox="0 0 32 32"><circle cx="16" cy="17" r="13.500" fill="#5cbb2c" stroke="#fff" strokeWidth="2" /><path d="M9 18h14q0-8-7-8t-7 8q1 7 7 7 5 0 6.500-4" fill="none" stroke="#fff" strokeWidth="3" /><path d="M2 24Q4 9 27 2q1 4-6 6" fill="none" stroke="#6ccb35" strokeWidth="2.500" /></svg></TaskButton>
          <TaskButton aria-label="表格"><svg width="33" height="33" viewBox="0 0 33 33"><rect width="32" height="32" x=".5" y=".5" rx="4" fill="#1cc43f" /><path d="M25 11H9v5.500h15.500V22H8" fill="none" stroke="#fff" strokeWidth="2.800" strokeLinejoin="round" /></svg></TaskButton>
          <TaskButton aria-label="录像"><svg width="30" height="32" viewBox="0 0 30 32"><circle cx="6" cy="6" r="4" fill="#222" stroke="#999" strokeWidth="1.500" /><path d="M8 9l5-3 2 5-2 5 2 15h-3l-2-9-2 9H6l2-14z" fill="#111" stroke="#3a2226" /><path d="M13 10l12-2v11l-11 2z" fill="#c62430" /><path d="M17 11h4v6h-4z" fill="none" stroke="#7c1018" /><path d="M12 3l6-2M20 4l6 2" stroke="#777" /></svg></TaskButton>
          <DeskSearch><input aria-label="桌面搜索" /><Caret $c="#111" $s={4} /><DeskGo aria-label="刷新搜索"><S w={17} h={16} c="#2f6fb5" sw="2"><path d="M9 1Q4 2 5 8M2 6l3 3.500L8 6" stroke="#6a9fd0" /><path d="M9 15q5-1 4-7M10 10l3-3.500 3 3.500" /></S></DeskGo></DeskSearch>
          <Dots $l={16} $r={5} />
          <Tray>
            <IconButton $r={8}>CH</IconButton>
            <IconButton $r={7} aria-label="输入法"><S w={15} c="#fff" sw="1.500"><rect width="15" height="15" fill="#6d8fc4" stroke="none" /><path d="M2 1v13M5 3h7v8H5zM9 9l4 4" /></S></IconButton>
            <IconButton $r={9} aria-label="帮助"><svg width="16" height="16" viewBox="0 0 16 16"><circle cx="8" cy="8" r="7.300" fill="#2236b4" stroke="#c8d0f0" /><text x="8" y="12.500" textAnchor="middle" fontSize="12" fontWeight="700" fontFamily="Open Sans" fill="#fff">?</text></svg></IconButton>
            <IconButton $r={9} aria-label="语言栏"><S w={9} h={18} c="#fff" sw="1"><path d="M3 .5h5.500V4H3zM.5 2.500H6V6H.5z" fill="#080b12" /><path d="M1 13h7l-3.500 3.500z" fill="#fff" stroke="none" /></S></IconButton>
            <IconButton $r={8} aria-label="卫士"><Plus360 s={17} /></IconButton>
            <IconButton $r={8} aria-label="网络"><S w={16} c="#fff" sw="1.200"><path d="M1 1v4h3V1M2.500 5v9H7M6 4h9v8H6z" /><circle cx="11" cy="10" r="3.500" fill="#3aa28c" stroke="#bfe9dc" /></S></IconButton>
            <IconButton aria-label="音量"><S w={15} h={14} c="#fff" sw="1.200"><path d="M1 5h2l3.500-4v12L3 9H1z" fill="#fff" /><path d="M9 5q1.500 2 0 4M11.500 3q3 4 0 8" /></S></IconButton>
          </Tray>
          <Clock><span>15:33</span><span>2016/1/31</span></Clock>
          <ShowDesktop aria-label="显示桌面" />
        </Taskbar>
        <SideHandle aria-label="展开侧栏"><Tri d="M6 0v8L0 4z" c="#fff" w={5} h={7} /></SideHandle>
        <SpeedBall>47</SpeedBall>
      </Screen>
    </>
  );
}
